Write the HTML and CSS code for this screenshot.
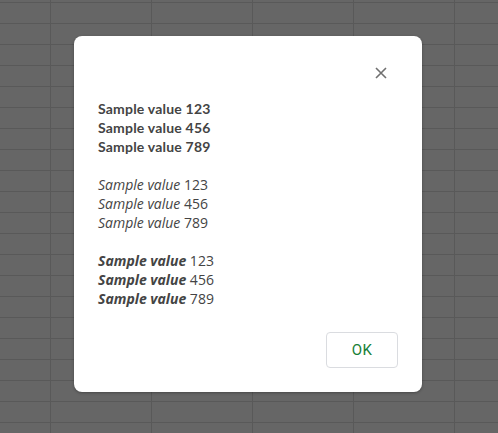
FILE: index.html
```html
<!DOCTYPE html>
<html>
<head>
<meta charset="utf-8">
<link rel="stylesheet" href="styles.css">
</head>
<body>
<div class="sheet"></div>
<div class="dialog">
  <div class="dialog-header">
    <button class="close" aria-label="Close">
      <svg width="12" height="12" viewBox="0 0 12 12"><path d="M1 1 L11 11 M11 1 L1 11" stroke="#707070" stroke-width="1.6" fill="none"/></svg>
    </button>
  </div>
  <div class="dialog-body">
    <p class="block b1">Sample value 123<br>Sample value 456<br>Sample value 789</p>
    <p class="block b2"><i>Sample value</i> 123<br><i>Sample value</i> 456<br><i>Sample value</i> 789</p>
    <p class="block b3"><b><i>Sample value</i></b> 123<br><b><i>Sample value</i></b> 456<br><b><i>Sample value</i></b> 789</p>
  </div>
  <div class="dialog-footer">
    <button class="ok">OK</button>
  </div>
</div>
</body>
</html>
```
FILE: styles.css
```css
html, body {
  margin: 0;
  padding: 0;
  width: 498px;
  height: 433px;
  overflow: hidden;
}
body {
  background-color: #666666;
  background-image:
    linear-gradient(to right, transparent 50px, #595959 50px, #595959 51px, transparent 51px),
    linear-gradient(to bottom, transparent 2px, #595959 2px, #595959 3px, transparent 3px);
  background-size: 101px 100%, 100% 21px;
}
.dialog {
  position: absolute;
  left: 74px;
  top: 36px;
  width: 348px;
  height: 356px;
  box-sizing: border-box;
  padding: 24px;
  background: #ffffff;
  border-radius: 8px;
  box-shadow: 0 1px 3px rgba(0,0,0,0.3);
  display: flex;
  flex-direction: column;
}
.dialog-header {
  height: 39px;
  display: flex;
  justify-content: flex-end;
  align-items: flex-start;
}
.close {
  width: 26px;
  height: 26px;
  margin: 0 4px 0 0;
  padding: 0;
  border: 0;
  background: transparent;
  display: flex;
  align-items: center;
  justify-content: center;
}
.dialog-body {
  flex: 1;
  color: #444444;
  font-family: "Open Sans", sans-serif;
  font-size: 14px;
  line-height: 19px;
}
.block {
  margin: 0 0 19px 0;
}
.block:last-child { margin-bottom: 0; }
.b1 {
  font-family: "Lato", sans-serif;
  font-weight: 700;
  font-size: 14px;
  letter-spacing: 0.2px;
}
.b2 i {
  font-weight: 400;
}
.b3 b {
  font-weight: 700;
}
.dialog-footer {
  display: flex;
  justify-content: flex-end;
}
.ok {
  width: 72px;
  height: 36px;
  border: 1px solid #dadce0;
  border-radius: 4px;
  background: #ffffff;
  color: #188038;
  font-family: "Roboto", sans-serif;
  font-weight: 400;
  font-size: 15px;
  letter-spacing: 0.5px;
  padding: 0;
}
```
